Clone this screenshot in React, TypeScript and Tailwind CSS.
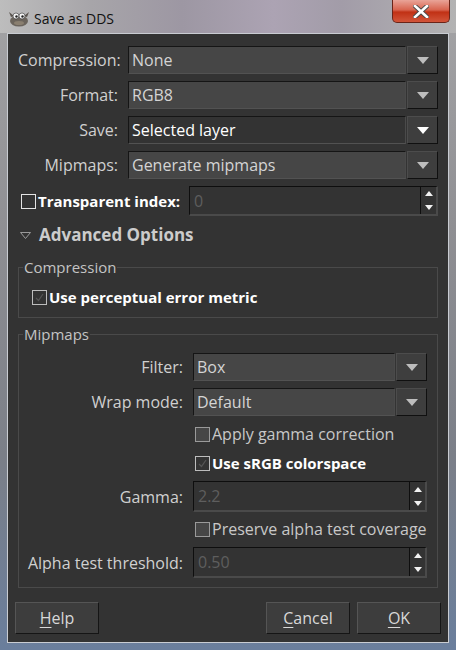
import type { ReactNode } from 'react';

const font = { fontFamily: '"Open Sans", "Liberation Sans", sans-serif' };

function DownArrow({ white = false }: { white?: boolean }) {
  return (
    <svg width="12" height="7" viewBox="0 0 12 7">
      <polygon points="0,0 12,0 6,7" fill={white ? '#ffffff' : '#bdbdbd'} />
    </svg>
  );
}

function Combo({ value, active = false }: { value: string; active?: boolean }) {
  return (
    <div className="flex h-[28px] flex-1 gap-[1px]">
      <div
        className={`flex flex-1 items-center border-t border-l border-t-[#151515] border-l-[#151515] border-b border-r border-b-[#525252] border-r-[#4a4a4a] pl-[3px] text-[16px] ${
          active ? 'bg-[#333333] text-white' : 'bg-[#464646] text-[#d4d4d4]'
        }`}
      >
        {value}
      </div>
      <div className="flex w-[31px] items-center justify-center border-t border-l border-t-[#4c4c4c] border-l-[#4c4c4c] border-b border-r border-b-[#101010] border-r-[#101010] bg-[#3e3e3e]">
        <DownArrow white={active} />
      </div>
    </div>
  );
}

function Spin({ value, h = 'h-[30px]' }: { value: string; h?: string }) {
  return (
    <div className={`flex ${h} flex-1 border-t border-l border-t-[#0e0e0e] border-l-[#0e0e0e] border-b-2 border-r-2 border-b-[#4a4a4a] border-r-[#4a4a4a] bg-[#333333]`}>
      <div className="flex flex-1 items-center pl-[4px] text-[16px] text-[#5e5e5e]">{value}</div>
      <div className="flex w-[16px] flex-col border-l border-l-[#0e0e0e]">
        <div className="flex flex-1 items-center justify-center">
          <svg width="8" height="5" viewBox="0 0 8 5">
            <polygon points="0,5 8,5 4,0" fill="#f2f2f2" />
          </svg>
        </div>
        <div className="flex flex-1 items-center justify-center">
          <svg width="8" height="5" viewBox="0 0 8 5">
            <polygon points="0,0 8,0 4,5" fill="#f2f2f2" />
          </svg>
        </div>
      </div>
    </div>
  );
}

function Check({ kind }: { kind: 'open' | 'faint' | 'grey' }) {
  if (kind === 'open')
    return <div className="h-[15px] w-[15px] shrink-0 border border-[#e4e4e4] bg-[#333333]" />;
  if (kind === 'grey')
    return <div className="h-[15px] w-[15px] shrink-0 border border-[#9a9a9a] bg-[#464646]" />;
  return (
    <div className="flex h-[15px] w-[15px] shrink-0 items-center justify-center border border-[#bdbdbd] bg-[#333333]">
      <svg width="11" height="11" viewBox="0 0 11 11">
        <polyline points="2,6 4.5,8.5 9,2" fill="none" stroke="#555555" strokeWidth="1.3" />
      </svg>
    </div>
  );
}

function Frame({ title, className, children }: { title: string; className: string; children: ReactNode }) {
  return (
    <fieldset className={`border border-[#4a4a4a] ${className}`}>
      <legend className="ml-[4px] px-[1px] text-[15px] leading-[18px] text-[#c4c4c4]">{title}</legend>
      {children}
    </fieldset>
  );
}

function Button({ mn, rest }: { mn: string; rest: string }) {
  return (
    <div className="flex h-[32px] w-[84px] items-center justify-center border border-t-[#555555] border-l-[#555555] border-b-[#151515] border-r-[#151515] bg-[#3d3d3d] text-[16px] text-[#d8d8d8]">
      <span className="underline decoration-[#d8d8d8] underline-offset-[3px]">{mn}</span>
      {rest}
    </div>
  );
}

export default function App() {
  return (
    <div
      className="relative flex h-[650px] w-[456px] flex-col overflow-hidden bg-[linear-gradient(to_bottom,#a4a4a6,#8f8f93_35%,#7b7f88_70%,#6a7e9c)]"
      style={font}
    >
      {/* title bar */}
      <div className="flex h-[33px] shrink-0 items-start bg-[linear-gradient(to_right,#bdbdbd,#a7a5a9_20%,#9d97a3_40%,#aca3b3_60%,#a29ca8_75%,#b3b3b3)] pl-[8px] pt-[6px]">
        <svg width="22" height="18" viewBox="0 0 22 18" className="mt-[3px]">
          <ellipse cx="11" cy="12" rx="9" ry="5.5" fill="#6b645c" />
          <path d="M3 8 L1 3 L6 7 Z" fill="#5a544e" />
          <path d="M19 8 L21 3 L16 7 Z" fill="#5a544e" />
          <circle cx="8" cy="7" r="3" fill="#f4f4f4" stroke="#333" strokeWidth="0.6" />
          <circle cx="14" cy="7" r="3" fill="#f4f4f4" stroke="#333" strokeWidth="0.6" />
          <circle cx="8.5" cy="7.5" r="1.2" fill="#222" />
          <circle cx="14.5" cy="7.5" r="1.2" fill="#222" />
          <ellipse cx="11" cy="14" rx="5" ry="2" fill="#8a7f70" />
        </svg>
        <div className="ml-[4px] mt-[2px] text-[14px] leading-[22px] text-[#111111]">Save as DDS</div>
        <div className="ml-auto -mt-[6px] mr-[6px] flex h-[23px] w-[58px] items-center justify-center rounded-b-[5px] border border-t-0 border-[#6a2418] bg-[linear-gradient(to_bottom,#e9a498,#d8644f_45%,#c13115_55%,#d2553a)]">
          <svg width="16" height="13" viewBox="0 0 16 13">
            <path d="M2 1 L14 12 M14 1 L2 12" stroke="#4a4a4a" strokeWidth="4.5" strokeLinecap="square" />
            <path d="M2 1 L14 12 M14 1 L2 12" stroke="#ffffff" strokeWidth="2.6" strokeLinecap="square" />
          </svg>
        </div>
      </div>

      {/* client area */}
      <div className="mx-[7px] flex h-[610px] flex-col border border-[#c9ccd2] bg-[#333333] px-[10px] pt-[12px] pb-[8px] text-[#d0d0d0]">
        <div className="flex flex-col gap-[7px]">
          {[
            ['Compression:', 'None', false],
            ['Format:', 'RGB8', false],
            ['Save:', 'Selected layer', true],
            ['Mipmaps:', 'Generate mipmaps', false],
          ].map(([label, value, active]) => (
            <div key={label as string} className="flex items-center gap-[10px]">
              <div className="w-[100px] whitespace-nowrap text-right text-[16px]">{label}</div>
              <Combo value={value as string} active={active as boolean} />
            </div>
          ))}
        </div>

        <div className="mt-[7px] flex items-center">
          <div className="ml-[3px] flex w-[168px] items-center gap-[2px]">
            <Check kind="open" />
            <span className="text-[15px] font-bold text-white">Transparent index:</span>
          </div>
          <Spin value="0" />
        </div>

        <div className="mt-[8px] flex h-[22px] items-center gap-[8px] pl-[2px]">
          <svg width="11" height="7" viewBox="0 0 11 7">
            <polygon points="0.5,0.5 10.5,0.5 5.5,6.5" fill="none" stroke="#9a9a9a" strokeWidth="1" />
          </svg>
          <span className="text-[17px] font-bold text-[#cccccc]">Advanced Options</span>
        </div>

        <Frame title="Compression" className="mt-[12px] pb-[11px]">
          <div className="mt-[12px] flex h-[18px] items-center gap-[2px] pl-[13px]">
            <Check kind="faint" />
            <span className="text-[15px] font-bold text-white">Use perceptual error metric</span>
          </div>
        </Frame>

        <Frame title="Mipmaps" className="mt-[7px] pb-[9px]">
          <div className="flex flex-col pr-[10px]">
            <div className="mt-[10px] flex items-center gap-[10px]">
              <div className="w-[164px] text-right text-[16px]">Filter:</div>
              <Combo value="Box" />
            </div>
            <div className="mt-[7px] flex items-center gap-[10px]">
              <div className="w-[164px] text-right text-[16px]">Wrap mode:</div>
              <Combo value="Default" />
            </div>
            <div className="mt-[9px] flex h-[18px] items-center gap-[2px] pl-[176px]">
              <Check kind="grey" />
              <span className="text-[16px] text-[#c8c8c8]">Apply gamma correction</span>
            </div>
            <div className="mt-[11px] flex h-[18px] items-center gap-[2px] pl-[176px]">
              <Check kind="faint" />
              <span className="text-[15px] font-bold text-white">Use sRGB colorspace</span>
            </div>
            <div className="mt-[9px] flex items-center gap-[10px]">
              <div className="w-[164px] text-right text-[16px]">Gamma:</div>
              <Spin value="2.2" h="h-[31px]" />
            </div>
            <div className="mt-[8px] flex h-[18px] items-center gap-[2px] pl-[176px]">
              <Check kind="grey" />
              <span className="text-[16px] text-[#c8c8c8]">Preserve alpha test coverage</span>
            </div>
            <div className="mt-[9px] flex items-center gap-[10px]">
              <div className="w-[164px] whitespace-nowrap text-right text-[16px]">Alpha test threshold:</div>
              <Spin value="0.50" h="h-[31px]" />
            </div>
          </div>
        </Frame>

        <div className="-mx-[3px] mt-[14px] flex items-center gap-[7px]">
          <Button mn="H" rest="elp" />
          <div className="flex-1" />
          <Button mn="C" rest="ancel" />
          <Button mn="O" rest="K" />
        </div>
      </div>
    </div>
  );
}
